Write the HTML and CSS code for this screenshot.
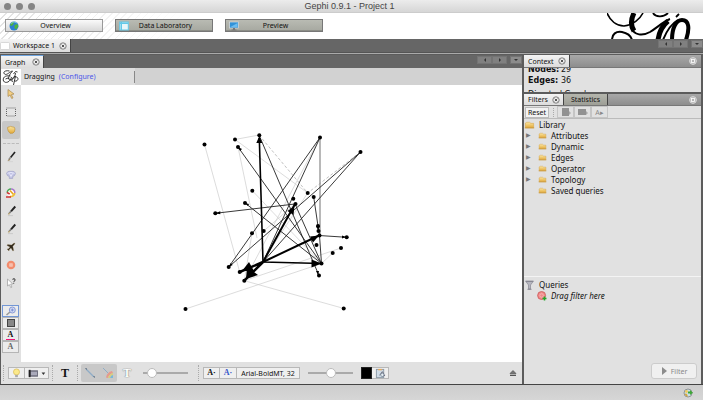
FILE: index.html
```html
<!DOCTYPE html>
<html lang="en">
<head>
<meta charset="utf-8">
<title>Gephi 0.9.1 - Project 1</title>
<link rel="stylesheet" href="styles.css">
</head>
<body>
<svg width="0" height="0" class="defs" aria-hidden="true">
  <defs>
    <linearGradient id="gold" x1="0" y1="0" x2="0" y2="1"><stop offset="0" stop-color="#fbe6a0"/><stop offset="1" stop-color="#e2a93a"/></linearGradient>
    <symbol id="close" viewBox="0 0 8 8"><circle cx="4" cy="4" r="3.2" fill="#eee" stroke="#666" stroke-width=".8"/><path d="M2.7 2.7l2.6 2.6M5.3 2.7L2.7 5.3" stroke="#555"/></symbol>
    <symbol id="restore" viewBox="0 0 8 8"><circle cx="4" cy="4" r="3.4" fill="#b5b5b5" stroke="#ddd" stroke-width=".9"/><rect x="2.5" y="2.5" width="3" height="3" fill="none" stroke="#fff" stroke-width=".8"/></symbol>
    <symbol id="folder" viewBox="0 0 8 6"><path d="M1 5V1.6L2 1h2l1 .8h2V5z" fill="url(#gold)" stroke="#d5a245" stroke-width=".4"/><path d="M.6 5.1h6.8" stroke="#c8922e" stroke-width=".6"/></symbol>
    <symbol id="pencil" viewBox="0 0 12 12"><path d="M10.3 1.5L6 6.3" stroke="#222" stroke-width="1.9"/><path d="M6 6.2L3.6 9" stroke="#777" stroke-width="1.6"/><path d="M4.3 7.5L2.5 10.2l2.7-1.7z" fill="#d3b979"/><path d="M3 10.6h5" stroke="#bbb" stroke-width=".6"/></symbol>
  </defs>
</svg>
<div class="app">
  <header class="titlebar">
    <span class="lights"><i></i><i></i><i></i></span>
    <h1>Gephi 0.9.1 - Project 1</h1>
  </header>

  <nav class="perspectives">
    <button class="persp active"><svg viewBox="0 0 10 10"><circle cx="5" cy="5" r="4.5" fill="#2c7fd2"/><path d="M1 4Q3 0 5 1.500L4 4 2 5zM5.500 4l3-1 .8 2.500L7 8.500 5.500 7z" fill="#4fb33c"/><path d="M2 2.500Q5-.5 8 2" stroke="#9dd" fill="none" stroke-width=".7"/></svg><span>Overview</span></button>
    <button class="persp"><svg viewBox="0 0 10 10"><rect x=".7" y="1" width="8.600" height="8" fill="#e8f6fa" stroke="#62c8e8"/><path d="M1 2.200h8M2.300 1v8" stroke="#62c8e8" stroke-width="1.400"/></svg><span>Data Laboratory</span></button>
    <button class="persp"><svg viewBox="0 0 10 10"><rect x=".6" y="1" width="8.800" height="6" fill="#3292d8" stroke="#ddd" stroke-width=".7"/><path d="M1.400 6L8.600 2v4z" fill="#6bbcf0"/><path d="M4 7h2v1.400h1.500v1h-5v-1H4z" fill="#777"/></svg><span>Preview</span></button>
    <svg class="logo" viewBox="0 0 96 26" aria-label="Gephi">
      <g fill="none" stroke="#000">
        <path d="M0 0C3 7 9 13 17 13C26 12 33 6 36 0" stroke-width="1.600"/>
        <path d="M24 14C27 23 36 23 43 19C51 14 57 8 63 6" stroke-width="2"/>
        <path d="M27 0C24 6 23 12 27 18" stroke-width="5"/>
        <path d="M5 27C5 21 9 18 15 19C20 20 24 23 25 27" stroke-width="2"/>
        <path d="M46 0C49 5 57 4 61 0" stroke-width="1.800"/>
        <path d="M69 4L72 1" stroke-width="1.800"/>
        <path d="M61 8C55 13 52 20 51 27" stroke-width="5"/>
        <path d="M65 27C65 15 69 7 75 7C82 7 83 15 79 27" stroke-width="4"/>
        <path d="M56 27Q62 12 71 7" stroke-width="2"/>
      </g>
    </svg>
  </nav>

  <div class="workspace">
    <span class="tab"><svg class="sheet" viewBox="0 0 10 8"><rect x=".5" y=".5" width="9" height="7" rx="1" fill="#fff" stroke="#ccc" stroke-width=".7"/></svg>Workspace 1<svg class="ic8"><use href="#close"/></svg></span>
    <span class="arrows"><button aria-label="Back"><svg viewBox="0 0 4 4"><path d="M3 0v4L1 2z"/></svg></button><button aria-label="Forward"><svg viewBox="0 0 4 4"><path d="M1 0v4l2-2z"/></svg></button><button class="down" aria-label="List"><svg viewBox="0 0 4 4"><path d="M0 1h4L2 3z"/></svg></button></span>
  </div>

  <main class="main">
    <section class="graph">
      <div class="tabbar dark">
        <span class="tab blue">Graph<svg class="ic8"><use href="#close"/></svg></span>
        <span class="arrows"><button aria-label="Back"><svg viewBox="0 0 4 4"><path d="M3 0v4L1 2z"/></svg></button><button aria-label="Forward"><svg viewBox="0 0 4 4"><path d="M1 0v4l2-2z"/></svg></button><button class="down" aria-label="List"><svg viewBox="0 0 4 4"><path d="M0 1h4L2 3z"/></svg></button></span>
      </div>
      <div class="mode">
        <div class="info">
          <svg class="mini" viewBox="0 0 19 16"><g fill="none" stroke="#222" stroke-width=".9"><path d="M8 2C4 1 1 3 3 5C5 7 9 2 11 2C8 5 5 11 9 11C12 11 14 6 14 4"/><path d="M9 7C3 6 1 9 2 12C4 15 9 13 10 8"/><path d="M11 13C9 10 12 7 15 8C18 9 16 13 13 12M14 7L12 16"/><path d="M12 5Q14 1 16 3M4 10Q7 8 8 10"/></g></svg>
          <span>Dragging</span><a href="#">(Configure)</a><i class="vline"></i>
        </div>
      </div>
      <div class="stage">
        <aside class="tools">
          <button aria-label="Select"><svg viewBox="0 0 12 12"><path d="M3 1.500v7l2-1.600 1.700 3.600 1.300-.6-1.700-3.300L9 6z" fill="#f3cf83" stroke="#a8874e" stroke-width=".7"/></svg></button>
          <button aria-label="Rectangle"><svg viewBox="0 0 12 12"><rect x="1.500" y="2" width="9" height="8" fill="#e4e4e4" stroke="#555" stroke-dasharray="1 1" stroke-width=".9"/></svg></button>
          <button class="on" aria-label="Drag"><svg viewBox="0 0 12 12"><path d="M2.500 4Q2.500 2.500 4 3Q5.500 1.800 7 2.800Q10 2.500 10 5Q10 8.500 7.500 9.300H5Q2.500 7 2.500 4z" fill="url(#gold)" stroke="#b98b34" stroke-width=".6"/></svg></button>
          <hr>
          <button aria-label="Painter"><svg viewBox="0 0 12 12"><path d="M10 1L5.600 6.600" stroke="#222" stroke-width="1.600"/><path d="M5.600 6.300L3.800 8.700" stroke="#888" stroke-width="1.700"/><path d="M4.300 7.800l-2 2.400 3-1.100z" fill="#9b8356"/><path d="M3 10.600h5" stroke="#ccc" stroke-width=".6"/></svg></button>
          <button aria-label="Sizer"><svg viewBox="0 0 12 12"><path d="M1.500 4.500Q2 2.500 4 2.300h4Q10 2.500 10.500 4.500Q10 7 7.700 7.600V9.500H4.300V7.600Q2 7 1.500 4.500z" fill="#bfc1e2" stroke="#9da0c4" stroke-width=".6"/><path d="M2.500 4.300Q6 2.500 9.500 4.300M4.500 4.500L6 7.500l1.500-3" stroke="#eef" stroke-width=".8" fill="none"/></svg></button>
          <button aria-label="Brush"><svg viewBox="0 0 12 12"><circle cx="6" cy="5.700" r="3.800" fill="#fff"/><path d="M2.200 5.700A3.800 3.800 0 0 1 6 1.900" stroke="#4aa657" fill="none" stroke-width="1.500"/><path d="M6 1.900A3.800 3.800 0 0 1 9.800 6" stroke="#a878ca" fill="none" stroke-width="1.500"/><path d="M9.800 6A3.800 3.800 0 0 1 5 9.300" stroke="#eebf36" fill="none" stroke-width="1.600"/><path d="M5 3.500l3.500 4" stroke="#e9a920" stroke-width="1.600"/><path d="M2 5.500L4.700 7M1 10h5" stroke="#cf3434" stroke-width="1.500"/></svg></button>
          <button aria-label="Node pencil"><svg><use href="#pencil"/></svg></button>
          <button aria-label="Edge pencil"><svg><use href="#pencil"/></svg></button>
          <button aria-label="Shortest path"><svg viewBox="0 0 12 12"><path d="M9.800 2Q10.300 2.600 9 4L7.800 5.300 8.700 9.500l-.8.6-1.900-3L4.300 8.600 4 10l-2-2 1.600-.3L5 6 2 4.400l.6-.9 4 .6L8 2.700Q9.300 1.600 9.800 2z" fill="#30281b" stroke="#9b8356" stroke-width=".3"/></svg></button>
          <button aria-label="Heat map"><svg viewBox="0 0 12 12"><circle cx="6" cy="6" r="3.200" fill="#fbd7ca" stroke="#f28b6c" stroke-width="2.200"/><circle cx="6" cy="6" r="1.200" fill="#fff" stroke="#f28b6c" stroke-width=".8"/></svg></button>
          <button aria-label="Edit"><svg viewBox="0 0 12 12"><path d="M2.500 2v7l1.800-1.400 1.500 3 1.100-.5-1.300-3 2.100-.2z" fill="#fff" stroke="#999" stroke-width=".7"/><path d="M7.500 2.300Q10 .8 10 2.800Q10 3.800 8.800 4.800M8.700 5.800v.8" fill="none" stroke="#222"/></svg></button>
          <span class="grow"></span>
          <div class="boxes">
            <button class="sel" aria-label="Center"><svg viewBox="0 0 12 10"><path d="M1.500 9L5 6" stroke="#999" stroke-width="1.600"/><circle cx="7.300" cy="4" r="3" fill="#d3dcf6" stroke="#7f92d0" stroke-width=".9"/><path d="M5.800 4h3M7.300 2.500v3" stroke="#6b80cc" stroke-width=".8"/></svg></button>
            <button aria-label="Reset colors"><svg viewBox="0 0 12 10"><rect x="2.500" y="1.500" width="7" height="7" fill="#888" stroke="#444"/></svg></button>
            <button class="pink" aria-label="Reset label colors"><b>A</b></button>
            <button aria-label="Reset label visibility"><b class="soft">A</b></button>
          </div>
        </aside>
        <svg class="network" viewBox="21 85 501 277" preserveAspectRatio="xMidYMid meet" aria-label="Graph">
          <g stroke="#c4c4c4" stroke-width=".6" fill="none">
            <path d="M204.500 144.500L239.700 272M235 139.500L259 135M235 139.500L307.700 193M238 147L257 238M252.300 190.700L321.500 263.500M185.500 309L321.500 263.500M344 308.500L244.300 280.700M341 248L244.300 280.700M332.700 253L321.500 263.500M320 137.500L244.300 280.700M252 233.300L244.300 280.700M263.700 231L295 204M307.700 193L262 262"/>
            <path d="M259 135L307.700 193M360.500 152L307.700 193" stroke="#999" stroke-dasharray="3 2"/>
          </g>
          <path d="M320 137.500V236" stroke="#888" stroke-width="1.200"/>
          <g stroke="#222" stroke-width=".9" fill="none">
            <path d="M320 137.500L228.700 267M320 137.500L263 262M360.500 152L228.700 267M360.500 152L263 262M259 135L319 275.500M238 147L321.500 263.500M295 204L215.300 213.300M245 203L321.500 263.500M295 204L321.500 263.500M313.700 197L318 226M319.500 235.500L321.500 263.500M319 235.500L346.700 237.300M318 226L319.500 235.500"/>
          </g>
          <g stroke="#000" fill="none">
            <path d="M263 262L259.300 138M263 262L321.500 263.500" stroke-width="1.600"/>
            <path d="M263 262L295 204M263 262L319 235.500" stroke-width="2"/>
            <path d="M263 262L239.700 272M263 262L244.300 280.700" stroke-width="2.500"/>
          </g>
          <path d="M259.300 136l-3 7 6 0zM294.500 206l-7 5 6 4zM319 235.500l-9 1 3 6zM321.500 263.500l-10-4v8zM242 271l7-9 5 9zM246 279l1-12 11 8zM215.300 213.300l5-2v3zM238 147l2 4 2-2zM318 275l-2-4 3 0zM346 237l-4-1.500v3zM228.700 267l2-4 2 2zM245 203l3 3 1-2zM318 230l-2-4h4z"/>
          <g class="nodes">
            <circle cx="204.500" cy="144.500" r="2"/><circle cx="235" cy="139.500" r="2"/><circle cx="238" cy="147" r="2"/><circle cx="259.300" cy="135.300" r="2"/><circle cx="320" cy="137.500" r="2"/><circle cx="360.500" cy="152" r="2"/><circle cx="252.300" cy="190.700" r="2"/><circle cx="245" cy="203" r="2"/><circle cx="215.300" cy="213.300" r="2"/><circle cx="307.700" cy="193" r="2"/><circle cx="293.300" cy="198.700" r="2"/><circle cx="295.500" cy="204" r="2"/><circle cx="313.700" cy="197" r="2"/><circle cx="252" cy="233.300" r="2"/><circle cx="263.700" cy="231" r="2"/><circle cx="228.700" cy="267" r="2"/><circle cx="239.700" cy="272" r="2"/><circle cx="244.300" cy="280.700" r="2"/><circle cx="185.500" cy="309" r="2"/><circle cx="343.700" cy="308.500" r="2"/><circle cx="319" cy="275.500" r="2"/><circle cx="321.500" cy="263.500" r="2"/><circle cx="332.700" cy="253" r="2"/><circle cx="341" cy="248" r="2"/><circle cx="346.700" cy="237.300" r="2"/><circle cx="318" cy="226" r="2"/><circle cx="318.500" cy="231" r="2"/><circle cx="319.500" cy="235.500" r="2"/><circle cx="316.500" cy="245" r="2"/>
          </g>
        </svg>
      </div>
      <footer class="bottombar">
        <i class="sep"></i>
        <span class="group"><button class="w17" aria-label="Background"><svg viewBox="0 0 12 12"><circle cx="6" cy="4.300" r="3.300" fill="#fbe98b" stroke="#d6b64a" stroke-width=".7"/><path d="M4.500 7.500h3V10h-3z" fill="#aaa"/></svg></button><button class="w24" aria-label="Screenshot"><svg class="wide" viewBox="0 0 20 12"><rect x="1" y="2.500" width="10" height="7" fill="#667"/><rect x="3" y="4" width="7" height="4" fill="#aab"/><path d="M1 2h2v8H1z" fill="#222"/><path d="M15 5h4l-2 2.500z" fill="#333"/></svg></button></span>
        <i class="sep"></i>
        <button class="plain" aria-label="Node labels"><b class="tee">T</b></button>
        <i class="sep"></i>
        <span class="pair"><button aria-label="Edges"><svg viewBox="0 0 12 12"><path d="M2 2l8 8" stroke="#8eacc6" stroke-width="1.200"/><path d="M1.500 1.500h1v1zM9.500 9.500h1v1z" stroke="#789"/></svg></button><button aria-label="Edge color"><svg viewBox="0 0 12 12"><path d="M1 1l9 9" stroke="#8eacc6"/><path d="M4 10.500Q5 5 10 4l1 2Q7 7 6 11z" fill="#e69a8c"/><path d="M6 11Q7 7 11 6v2Q9 8 8 11z" fill="#d8cf7b"/><path d="M8 11Q9 8 11 8v3z" fill="#7bb8d8"/></svg></button></span>
        <button class="plain narrow" aria-label="Edge labels"><b class="tee hollow">T</b></button>
        <input class="slider first" type="range" min="0" max="100" value="12" aria-label="Edge weight">
        <i class="sep"></i>
        <span class="group"><button class="w17" aria-label="Size mode"><b class="aa">A</b></button><button class="w17" aria-label="Color mode"><b class="aa bl">A</b></button><button class="font">Arial-BoldMT, 32</button></span>
        <input class="slider" type="range" min="0" max="100" value="50" aria-label="Font size">
        <span class="group last"><button class="black" aria-label="Label color"></button><button class="w17" aria-label="Attributes"><svg viewBox="0 0 12 12"><rect x="1.500" y="1.500" width="8" height="9" fill="#cfdbe6" stroke="#8a98a5"/><path d="M3.500 1h4v1.500h-4z" fill="#e8a95c"/><path d="M5 8l3-4 2 3M8 9l3-1" stroke="#667" fill="none"/><circle cx="8" cy="7.500" r="1.800" fill="#e7eef4" stroke="#678" stroke-width=".7"/></svg></button></span>
        <button class="eject" aria-label="Expand"><svg viewBox="0 0 8 8"><path d="M1 4.500L4 1.500l3 3z" fill="#777" stroke="#444" stroke-width=".6"/><path d="M1 6.300h6" stroke="#444" stroke-width="1.200"/></svg></button>
      </footer>
    </section>

    <div class="side">
      <section class="context">
        <div class="tabbar"><span class="tab">Context<svg class="ic8"><use href="#close"/></svg></span><svg class="ic8 restore"><use href="#restore"/></svg></div>
        <div class="stats"><p><b>Nodes:</b>29</p><p><b>Edges:</b>36</p><p class="kind">Directed Graph</p></div>
      </section>
      <section class="filters">
        <div class="tabbar"><span class="tab">Filters<svg class="ic8"><use href="#close"/></svg></span><button class="tab off">Statistics</button><svg class="ic8 restore"><use href="#restore"/></svg></div>
        <div class="ftools"><button class="reset">Reset</button><i class="sep"></i><span class="trio"><button aria-label="Export column"><svg viewBox="0 0 12 10"><path d="M2 1h7v8H2z" fill="#929292"/><path d="M9 4l2 2-2 2z" fill="#aaa"/></svg></button><button aria-label="Export workspace"><svg viewBox="0 0 12 10"><path d="M1 2h8v6H1z" fill="#929292"/><path d="M9 4l2 2-2 2z" fill="#aaa"/></svg></button><button aria-label="Export labels">A▸</button></span></div>
        <ul class="tree">
          <li class="root"><svg class="big"><use href="#folder"/></svg>Library</li>
          <li><i>▶</i><svg><use href="#folder"/></svg>Attributes</li>
          <li><i>▶</i><svg><use href="#folder"/></svg>Dynamic</li>
          <li><i>▶</i><svg><use href="#folder"/></svg>Edges</li>
          <li><i>▶</i><svg><use href="#folder"/></svg>Operator</li>
          <li><i>▶</i><svg><use href="#folder"/></svg>Topology</li>
          <li><i></i><svg><use href="#folder"/></svg>Saved queries</li>
        </ul>
        <ul class="tree queries">
          <li class="root"><svg class="big" viewBox="0 0 10 10"><path d="M1 1h8L6 5v4H4V5z" fill="#b6b6bf" stroke="#888892" stroke-width=".7"/><path d="M1.500 1.500h7M3 9.300h4" stroke="#888892"/></svg>Queries</li>
          <li class="drag"><svg viewBox="0 0 10 10"><circle cx="4.600" cy="4.500" r="4" fill="#f08a8a" stroke="#c94f4f" stroke-width=".7"/><circle cx="4.600" cy="4.500" r="1.800" fill="none" stroke="#fbd0d0" stroke-width=".5"/><path d="M5.500 7.500h4M7.500 5.500v4" stroke="#24a52a" stroke-width="1.500"/></svg><em>Drag filter here</em></li>
        </ul>
        <div class="run"><button><svg viewBox="0 0 6 8"><path d="M1 0v8l5-4z" fill="#8c8c8c"/></svg>Filter</button></div>
      </section>
    </div>
  </main>

  <footer class="status"><svg viewBox="0 0 10 10"><circle cx="5" cy="5" r="4" fill="#c9dfe6" stroke="#777" stroke-width=".7"/><path d="M1.500 6Q4 4 5 8.800Q2.500 8.500 1.500 6z" fill="#d5a63f"/><path d="M5 5.500V3.500h2V2l3 2.800L7 7V5.500z" fill="#3ea637"/><circle cx="3.500" cy="3.500" r="1.400" fill="#f2ca5a"/></svg></footer>
</div>
</body>
</html>
```
FILE: styles.css
```css
* { box-sizing: border-box; }
body {
  margin: 0;
  font: 7px/11px "Noto Sans", "Open Sans", sans-serif;
  color: #111;
}
button {
  margin: 0;
  padding: 0;
  border: 0;
  background: none;
  color: inherit;
  font: inherit;
  display: flex;
  align-items: center;
  justify-content: center;
}
svg { display: block; flex: none; }
i { font-style: normal; }
p, ul, h1 { margin: 0; padding: 0; }
.defs { position: absolute; }
.app { display: flex; flex-direction: column; min-height: 100vh; background: #5c5c5c; }

.titlebar {
  display: flex;
  align-items: center;
  height: 13px;
  background: linear-gradient(#ececec, #d6d6d6);
  border-bottom: 1px solid #ccc;
}
.titlebar h1 { flex: 1; text-align: center; font: 9px/12px "Liberation Sans", sans-serif; color: #444; padding-right: 42px; }
.lights { display: flex; gap: 5px; width: 38px; padding-left: 4px; }
.lights i { width: 7px; height: 7px; border-radius: 50%; background: #858585; }

.perspectives {
  display: flex;
  gap: 12px;
  height: 26px;
  padding: 6px 10px 0 5px;
  background:
    linear-gradient(90deg, transparent, #fff 190px),
    repeating-linear-gradient(135deg, #fff 0 4px, #e3e3e3 4px 5px);
}
.persp {
  width: 98px;
  height: 13px;
  border: 1px solid #777;
  background: linear-gradient(#b9bbb3, #a6a8a0);
  box-shadow: inset 0 -1px #8c8e87;
}
.persp.active { background: linear-gradient(#fafafa, #d8d8d8); border-color: #999; box-shadow: none; }
.persp svg { width: 10px; height: 10px; margin-left: 3px; }
.persp span { flex: 1; padding-right: 10px; }
.logo { width: 96px; height: 26px; margin: -6px -10px 0 auto; }

.workspace, .tabbar { display: flex; align-items: stretch; height: 13px; }
.workspace { height: 14px; background: #666; border-bottom: 1px solid #555; }
.tab {
  display: flex;
  align-items: center;
  gap: 5px;
  padding: 0 3px 0 4px;
  background: linear-gradient(#f4f4f4, #dcdcdc);
  border-right: 1px solid #444;
}
.workspace .tab { padding-left: 0; gap: 4px; }
.workspace .sheet { margin-right: -1px; }
.sheet { width: 10px; height: 8px; }
.ic8 { width: 8px; height: 8px; }
.arrows { display: flex; align-items: flex-start; margin-left: auto; padding-top: 1px; }
.arrows button { width: 15px; height: 8px; background: #808080; border: 1px solid #747474; }
.arrows .down { width: 12px; margin-left: 3px; background: #8c8c8c; }
.arrows svg { width: 4px; height: 4px; fill: #333; }

.main { flex: 1; display: flex; gap: 2px; padding: 1px 2px 0 1px; border-top: 1px solid #aaa; }
.graph { flex: 1; min-width: 0; display: flex; flex-direction: column; background: #e1e1e1; }
.dark { background: #666; }
.tab.blue { border-top: 1px solid #6ea4df; gap: 7px; }
.mode { display: flex; height: 17px; background: #d2d2d2; }
.info { display: flex; align-items: center; gap: 4px; background: #dedede; }
.mini { width: 20px; height: 16px; background: #fff; }
.mode .mini { margin-right: -1px; }
.mode a { color: #4a55e8; text-decoration: none; }
.vline { width: 1px; height: 12px; background: #888; margin-left: 34px; }
.stage { flex: 1; display: flex; }
.tools { width: 20px; display: flex; flex-direction: column; background: #e1e1e1; }
.tools > button { height: 18px; width: 18px; margin-left: 1px; }
.tools > button svg { width: 12px; height: 12px; }
.tools .on { background: #c8c8c8; border-radius: 2px; }
.tools hr { width: 16px; margin: 4px 2px; border: 0; border-top: 1px dashed #bbb; }
.grow { flex: 1; }
.boxes { margin-bottom: 9px; }
.boxes button { width: 17px; height: 12px; margin-left: 1px; border: 1px solid #b5b5b5; background: #ececec; }
.boxes .sel { border-color: #7397d5; }
.boxes svg { width: 12px; height: 10px; }
.boxes b { font: bold 8px/8px "Liberation Serif", serif; }
.boxes .pink b { width: 9px; height: 9px; text-align: center; border-bottom: 1px solid #f0167a; }
.boxes .soft { color: #666; }
.network { flex: 1; min-width: 0; height: 277px; background: #fff; }

.bottombar { display: flex; align-items: center; height: 22px; padding-left: 2px; }
.sep { width: 1px; height: 16px; border-left: 1px dotted #aaa; }
.group { display: flex; margin-left: 4px; }
.group button { height: 12px; border: 1px solid #b8b8b8; background: #efefef; }
.group button + button { border-left: 0; }
.group .w17 { width: 17px; }
.group .w24 { width: 24px; }
.group svg { width: 11px; height: 11px; }
.group .wide { width: 20px; }
.group + .sep { margin-left: 3px; }
.plain { width: 24px; }
.plain.narrow { width: 20px; }
.tee { font: bold 12px/14px "Liberation Serif", serif; color: #111; }
.hollow { color: #fff; text-shadow: 0 0 1px #666, 0 0 1px #888; }
.pair { display: flex; margin-left: 3px; background: #c8c8c8; border-radius: 2px; }
.pair button { width: 18px; height: 18px; }
.pair svg { width: 12px; height: 12px; }
.slider { appearance: none; width: 45px; height: 12px; margin: 0 0 0 8px; background: none; }
.slider.first { margin: 0 10px 0 6px; }
.slider::-webkit-slider-runnable-track { height: 2px; background: #aaa; }
.slider::-webkit-slider-thumb { appearance: none; width: 10px; height: 10px; margin-top: -4px; border-radius: 50%; border: 1px solid #bbb; background: #fff; }
.aa { font: bold 8px/10px "Liberation Serif", serif; }
.aa::after { content: "·"; }
.bl { color: #3656c9; }
.group .font { width: 63px; }
.group.last { margin-left: 8px; }
.group .black { width: 11px; background: #000; border: 1px solid #222; }
.eject { margin: 0 5px 0 auto; }
.eject svg { width: 8px; height: 8px; }

.side { width: 177px; display: flex; flex-direction: column; gap: 2px; }
.context, .filters { background: #e1e1e1; }
.side .tabbar { background: linear-gradient(#a8a8a8, #8d8d8d); border-bottom: 1px solid #777; }
.restore { margin: 2px 4px 0 auto; }
.side .tab.off { background: linear-gradient(#b5b6ad, #9d9e96); padding: 0 7px; }
.stats { height: 24px; overflow: hidden; padding-left: 4px; font: 8px/11px "DejaVu Sans", sans-serif; }
.stats p { display: flex; }
.stats p:first-child { margin-top: -4px; }
.stats b { width: 33px; }
.stats .kind { margin-top: 3px; }
.filters { flex: 1; display: flex; flex-direction: column; }
.filters .tabbar { height: 12px; }
.side .tab { gap: 4px; }
.ftools { display: flex; align-items: center; height: 13px; border-bottom: 1px solid #bbb; }
.reset { width: 24px; height: 11px; margin-left: 1px; border: 1px solid #bbb; background: #f2f2f2; }
.ftools .sep { height: 9px; margin: 0 3px 0 4px; }
.trio { display: flex; }
.trio button { width: 17px; height: 12px; border: 1px solid #c5c5c5; color: #888; }
.trio svg { width: 12px; height: 10px; }
.tree { flex: 1; list-style: none; font-size: 8px; }
.tree li { display: flex; align-items: center; height: 11px; }
.tree i { width: 14px; padding-left: 2px; color: #777; font-size: 6px; }
.tree svg { width: 9px; height: 7px; margin-right: 4px; }
.tree .big { width: 11px; height: 10px; margin-right: 4px; }
.queries { flex: none; padding-top: 2px; border-top: 1px solid #f4f4f4; }
.queries .drag svg { width: 10px; height: 10px; margin: 0 4px 0 13px; }
.run { height: 83px; display: flex; align-items: flex-end; justify-content: flex-end; padding: 0 4px 5px 0; }
.run button { width: 46px; height: 16px; gap: 4px; border: 1px solid #ccc; border-radius: 3px; background: #f0f0f0; color: #888; }
.run svg { width: 6px; height: 8px; }

.status { display: flex; align-items: center; justify-content: flex-end; height: 16px; padding-right: 10px; background: linear-gradient(#cdcdcd, #d6d6d6); border-top: 1px solid #444; }
.status svg { width: 10px; height: 10px; }
```
